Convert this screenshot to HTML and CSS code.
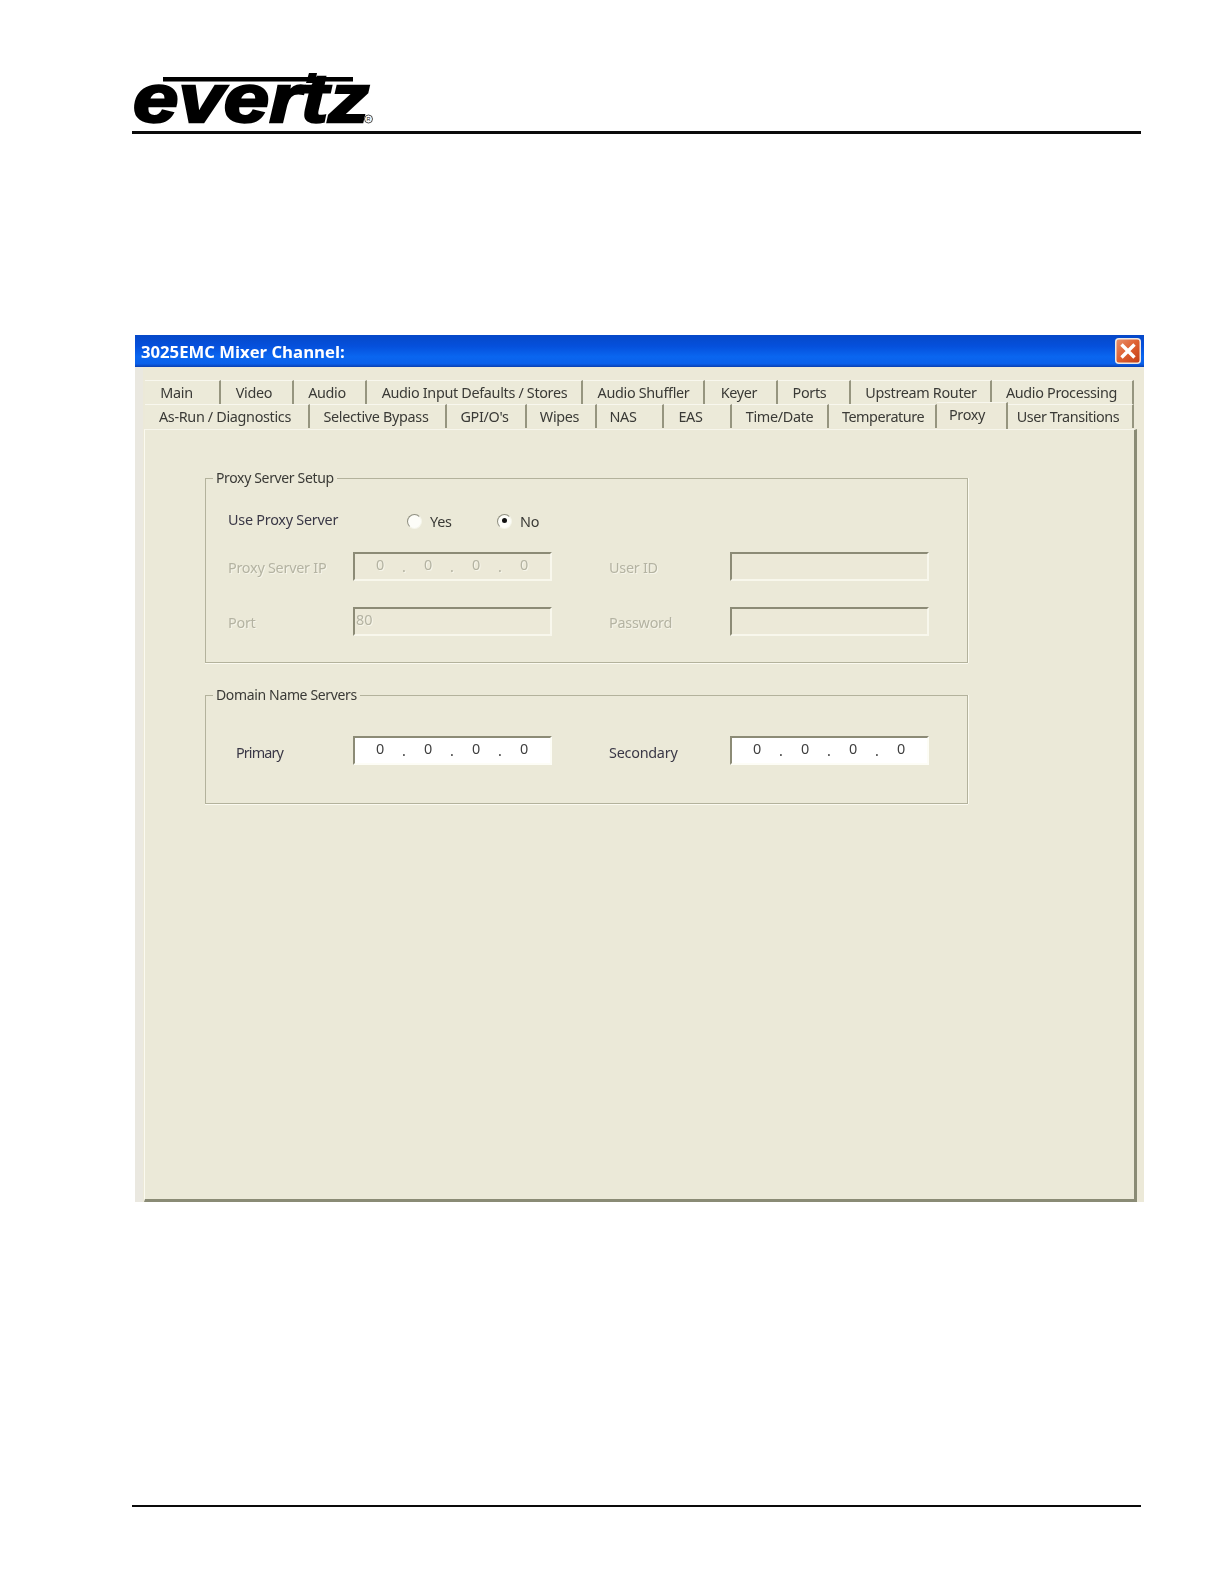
FILE: index.html
```html
<!DOCTYPE html>
<html lang="en">
<head>
<meta charset="utf-8">
<title>3025EMC Mixer Channel</title>
<link rel="stylesheet" href="styles.css">
</head>
<body>
<div class="page">
  <header class="header">
    <svg class="logo" width="242" height="54" viewBox="0 0 242 54" aria-label="evertz logo">
      <rect x="31" y="7" width="190" height="4.5" fill="#000"/>
      <polygon points="177,3 185,3 183,13 174,13" fill="#000"/>
      <text class="logo-text" x="1" y="52" textLength="236" lengthAdjust="spacingAndGlyphs">evertz</text>
      <circle cx="236.5" cy="49" r="4" fill="#fff" stroke="#222" stroke-width="0.8"/>
      <text class="logo-r" x="234.6" y="51.2">R</text>
    </svg>
  </header>

  <main class="window">
    <div class="titlebar">
      <span class="title">3025EMC Mixer Channel:</span>
      <span class="close">
        <svg width="26" height="26" viewBox="0 0 26 26">
          <defs>
            <linearGradient id="cg" x1="0" y1="0" x2="1" y2="1">
              <stop offset="0" stop-color="#e8926f"/>
              <stop offset="0.5" stop-color="#de5f30"/>
              <stop offset="1" stop-color="#c23e18"/>
            </linearGradient>
          </defs>
          <rect x="0.75" y="0.75" width="24.5" height="24.5" rx="3" fill="url(#cg)" stroke="#f0e9e2" stroke-width="1.5"/>
          <path d="M6.5 6.5 L19.5 19.5 M19.5 6.5 L6.5 19.5" stroke="#fff" stroke-width="3.4" fill="none"/>
        </svg>
      </span>
    </div>
    <div class="client">
      <div class="tabrow tabrow-top">
        <span class="tab">Main</span>
        <span class="tab">Video</span>
        <span class="tab">Audio</span>
        <span class="tab">Audio Input Defaults / Stores</span>
        <span class="tab">Audio Shuffler</span>
        <span class="tab">Keyer</span>
        <span class="tab">Ports</span>
        <span class="tab">Upstream Router</span>
        <span class="tab">Audio Processing</span>
      </div>
      <div class="tabrow tabrow-bottom">
        <span class="tab">As-Run / Diagnostics</span>
        <span class="tab">Selective Bypass</span>
        <span class="tab">GPI/O's</span>
        <span class="tab">Wipes</span>
        <span class="tab">NAS</span>
        <span class="tab">EAS</span>
        <span class="tab">Time/Date</span>
        <span class="tab">Temperature</span>
        <span class="tab tab-active">Proxy</span>
        <span class="tab">User Transitions</span>
      </div>
      <div class="panel">
        <fieldset class="group group-proxy">
          <legend class="legend">Proxy Server Setup</legend>
          <div class="use-row">
            <span class="label">Use Proxy Server</span>
            <span class="radio-item radio-yes"><span class="radio"></span><span>Yes</span></span>
            <span class="radio-item radio-no"><span class="radio radio-on"></span><span>No</span></span>
          </div>
          <div class="field-grid">
            <span class="label disabled">Proxy Server IP</span>
            <div class="input input-off ip"><span>0</span><i>.</i><span>0</span><i>.</i><span>0</span><i>.</i><span>0</span></div>
            <span class="label disabled">User ID</span>
            <div class="input input-off"></div>
            <span class="label disabled">Port</span>
            <div class="input input-off port">80</div>
            <span class="label disabled">Password</span>
            <div class="input input-off"></div>
          </div>
        </fieldset>
        <fieldset class="group group-dns">
          <legend class="legend">Domain Name Servers</legend>
          <div class="field-grid dns-grid">
            <span class="label label-indent">Primary</span>
            <div class="input ip"><span>0</span><i>.</i><span>0</span><i>.</i><span>0</span><i>.</i><span>0</span></div>
            <span class="label">Secondary</span>
            <div class="input ip"><span>0</span><i>.</i><span>0</span><i>.</i><span>0</span><i>.</i><span>0</span></div>
          </div>
        </fieldset>
      </div>
    </div>
  </main>

  <footer class="footer"></footer>
</div>
</body>
</html>
```

FILE: styles.css
```css
* { box-sizing: border-box; }
html, body { margin: 0; padding: 0; background: #fff; }
body { font-family: "Noto Sans", "Liberation Sans", sans-serif; }
.page { width: 1224px; height: 1584px; padding-top: 70px; }

.header { margin-left: 132px; width: 1009px; height: 64px; border-bottom: 3px solid #0a0a0a; }
.logo { display: block; overflow: visible; }
.logo-text { font-family: "Liberation Sans", sans-serif; font-weight: 700; font-style: italic; font-size: 68px; fill: #000; stroke: #000; stroke-width: 2.4px; }
.logo-r { font-family: "Liberation Sans", sans-serif; font-size: 5.5px; fill: #222; }

.window { margin: 201px 0 0 135px; width: 1009px; height: 867px; background: #ece9d8; filter: blur(0.35px); }
.titlebar { height: 32px; display: flex; align-items: center; justify-content: space-between; padding: 0 3px 0 6px;
  background: linear-gradient(180deg, #0648c8 0%, #0550dc 35%, #0a66f0 68%, #0a60ea 90%, #0a3fb0 100%); }
.title { font-family: "Open Sans", sans-serif; font-weight: 700; font-size: 16.7px; color: #fff; }
.close { display: block; height: 26px; }

.client { padding: 13px 0 0 9px; height: 835px; background: linear-gradient(90deg, #eae8e0 0, #eae8e0 8px, #ece9d8 8px); }
.tabrow { display: grid; height: 24px; font-size: 14.4px; letter-spacing: -0.33px; padding-left: 1px; }
.tabrow-top { grid-template-columns: 76px 73px 73px 216px 122px 73px 73px 141px 142px; }
.tabrow-bottom { grid-template-columns: 165px 137px 80px 70px 67px 68px 97px 108px 71px 126px; }
.tab { display: flex; align-items: center; justify-content: center; height: 24px; white-space: nowrap;
  background: #ecead9; border-top: 1px solid #f8f7ee; border-right: 2px solid #96957f; color: #3a3a36; padding-right: 3px; }
.tabrow-top .tab:nth-child(1) { padding-right: 11px; }
.tabrow-top .tab:nth-child(2) { padding-right: 5px; }
.tabrow-top .tab:nth-child(3) { padding-right: 5px; }
.tabrow-top .tab:nth-child(4) { padding: 0 0 0 1px; }
.tabrow-top .tab:nth-child(5) { padding: 0 0 0 1px; }
.tabrow-top .tab:nth-child(7) { padding-right: 8px; }
.tabrow-top .tab:nth-child(8) { padding: 0 0 0 1px; }
.tabrow-top .tab:nth-child(9) { padding-right: 1px; }
.tabrow-bottom .tab:nth-child(5) { padding-right: 13px; }
.tabrow-bottom .tab:nth-child(6) { padding-right: 13px; }
.tabrow-bottom .tab:nth-child(7) { padding-right: 0; }
.tabrow-bottom .tab:nth-child(8) { padding: 0 0 0 2px; letter-spacing: -0.45px; }
.tabrow-bottom .tab:nth-child(10) { padding-right: 4px; letter-spacing: -0.4px; }
.tabrow-bottom .tab.tab-active { background: #ece9d8; height: 27px; margin-top: -2px; padding: 0 9px 3px 0; position: relative; z-index: 1; }

.panel { width: 993px; height: 773px; margin-top: 1px; padding: 39px 0 0 60px; background: #ebe9d8;
  border-top: 1px solid #f7f6ec; border-left: 1px solid #fbfaf0; border-right: 3px solid #8a8b75; border-bottom: 3px solid #8a8b75; }

.group { margin: 0; padding: 0; width: 763px; border: 1px solid #b3b29c; box-shadow: 0 1px 0 #fbfaf0, 1px 0 0 #fbfaf0; }
.legend { margin-left: 7px; padding: 0 3px; font-size: 14px; letter-spacing: -0.35px; line-height: 18px; color: #3a3a36; }
.group-proxy { height: 194px; }
.group-dns { margin-top: 23px; height: 118px; }

.use-row { display: flex; align-items: center; height: 20px; margin-top: 22px; font-size: 14.4px; letter-spacing: -0.25px; color: #33313a; }
.label { font-size: 14.4px; letter-spacing: -0.25px; color: #3a3846; white-space: nowrap; }
.use-row .label { width: 179px; margin-left: 22px; }
.radio-item { display: flex; align-items: center; gap: 8px; color: #3a3a36; margin-top: 4px; }
.radio-yes { width: 90px; }
.radio { display: block; width: 15px; height: 15px; border-radius: 50%; background: #fdfdf8; border: 1.5px solid; border-color: #8f8f80 #f5f5ea #f5f5ea #8f8f80; position: relative; }
.radio-on::after { content: ""; position: absolute; left: 3.5px; top: 3.5px; width: 5px; height: 5px; border-radius: 50%; background: #111; }

.field-grid { display: grid; grid-template-columns: 147px 199px 178px 199px; grid-auto-rows: 29px; row-gap: 26px; margin-top: 23px; align-items: center; }
.dns-grid { margin-top: 32px; }
.field-grid > .label:nth-child(1), .field-grid > .label:nth-child(5) { padding-left: 22px; }
.field-grid > .label:nth-child(3), .field-grid > .label:nth-child(7) { padding-left: 57px; }
.dns-grid > .label { padding-top: 3px; }
.field-grid > .label.label-indent { padding-left: 30px; letter-spacing: -0.9px; }
.disabled { color: #b4b3a2; text-shadow: 1px 1px 0 #f6f5ea; padding-top: 2px; }

.input { height: 29px; background: #fff; border-style: solid; border-width: 2px; border-color: #8c8b76 #fdfdf6 #fdfdf6 #8c8b76; font-size: 14.4px; color: #3f3f3f; }
.input-off { background: #ece9d8; color: #b4b3a2; border-color: #8c8b76 #f8f7ec #f8f7ec #8c8b76; text-shadow: 1px 1px 0 #f6f5ea; }
.ip { display: grid; grid-template-columns: repeat(7, 24px); justify-items: center; justify-content: start; padding-left: 13px; line-height: 22px; }
.ip i { font-style: normal; margin-top: 2px; }
.port { padding-left: 1px; line-height: 22px; }

.footer { margin: 303px 0 0 132px; width: 1009px; height: 2px; background: #0a0a0a; }
```
